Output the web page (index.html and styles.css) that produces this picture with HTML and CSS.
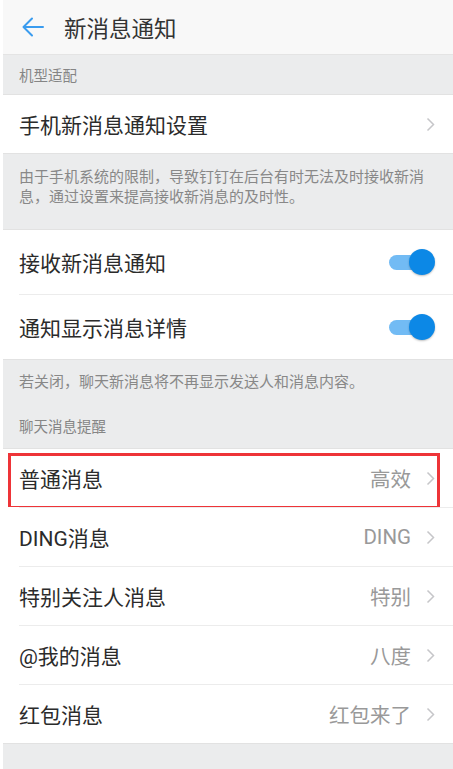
FILE: index.html
```html
<!DOCTYPE html>
<html lang="zh-CN">
<head>
  <meta charset="UTF-8" />
  <title>新消息通知</title>
  <meta name="viewport" content="width=device-width, initial-scale=1.0" />
  <link rel="stylesheet" href="styles.css">
</head>
<body>

  <div class="header">
    <svg class="back" width="22" height="20" viewBox="0 0 22 20">
      <path d="M21 10H2M10 1.5L1.5 10L10 18.5" fill="none" stroke="#3a9cef" stroke-width="2" stroke-linecap="round" stroke-linejoin="round"/>
    </svg>
    <span class="title">新消息通知</span>
  </div>

  <div class="section-title">机型适配</div>

  <div class="row">
    <div class="row-body">
      <span class="label">手机新消息通知设置</span>
      <svg class="chevron" width="9" height="15" viewBox="0 0 9 15"><path d="M1.5 1.5L7.5 7.5L1.5 13.5" fill="none" stroke="#c6c6c9" stroke-width="1.5"/></svg>
    </div>
  </div>

  <div class="note note-first">由于手机系统的限制，导致钉钉在后台有时无法及时接收新消息，通过设置来提高接收新消息的及时性。</div>

  <div class="row row-tall">
    <div class="row-body">
      <span class="label">接收新消息通知</span>
      <span class="toggle"><span class="thumb"></span></span>
    </div>
  </div>
  <div class="row row-tall">
    <div class="row-body sep">
      <span class="label">通知显示消息详情</span>
      <span class="toggle"><span class="thumb"></span></span>
    </div>
  </div>

  <div class="note note-second">若关闭，聊天新消息将不再显示发送人和消息内容。</div>
  <div class="section-title section-chat">聊天消息提醒</div>

  <div class="row highlighted">
    <div class="row-body">
      <span class="label">普通消息</span>
      <span class="value">高效</span>
      <svg class="chevron" width="9" height="15" viewBox="0 0 9 15"><path d="M1.5 1.5L7.5 7.5L1.5 13.5" fill="none" stroke="#c6c6c9" stroke-width="1.5"/></svg>
    </div>
    <div class="mark"></div>
  </div>
  <div class="row">
    <div class="row-body sep">
      <span class="label">DING消息</span>
      <span class="value">DING</span>
      <svg class="chevron" width="9" height="15" viewBox="0 0 9 15"><path d="M1.5 1.5L7.5 7.5L1.5 13.5" fill="none" stroke="#c6c6c9" stroke-width="1.5"/></svg>
    </div>
  </div>
  <div class="row">
    <div class="row-body sep">
      <span class="label">特别关注人消息</span>
      <span class="value">特别</span>
      <svg class="chevron" width="9" height="15" viewBox="0 0 9 15"><path d="M1.5 1.5L7.5 7.5L1.5 13.5" fill="none" stroke="#c6c6c9" stroke-width="1.5"/></svg>
    </div>
  </div>
  <div class="row">
    <div class="row-body sep">
      <span class="label">@我的消息</span>
      <span class="value">八度</span>
      <svg class="chevron" width="9" height="15" viewBox="0 0 9 15"><path d="M1.5 1.5L7.5 7.5L1.5 13.5" fill="none" stroke="#c6c6c9" stroke-width="1.5"/></svg>
    </div>
  </div>
  <div class="row">
    <div class="row-body sep">
      <span class="label">红包消息</span>
      <span class="value">红包来了</span>
      <svg class="chevron" width="9" height="15" viewBox="0 0 9 15"><path d="M1.5 1.5L7.5 7.5L1.5 13.5" fill="none" stroke="#c6c6c9" stroke-width="1.5"/></svg>
    </div>
  </div>

  <div class="footer"></div>

</body>
</html>
```

FILE: styles.css
```css
    html, body {
      margin: 0;
      background-color: #fff;
    }

    body {
      padding-left: 3px;
      font-family: Roboto, "Noto Sans CJK SC", sans-serif;
      color: #333;
    }

    .header {
      height: 54px;
      display: flex;
      align-items: center;
      padding-left: 19px;
      background-color: #f8f8f8;
      border-bottom: 1px solid #e4e4e4;
    }

    .back {
      margin-right: 20px;
      margin-top: -1px;
    }

    .title {
      font-size: 22.5px;
      color: #333;
    }

    .section-title {
      height: 39px;
      display: flex;
      align-items: center;
      padding-left: 16px;
      font-size: 14.5px;
      color: #858585;
      background-color: #ebeced;
      border-bottom: 1px solid #e2e2e2;
    }

    .section-chat {
      height: 47px;
      align-items: flex-start;
      box-sizing: border-box;
      padding-top: 13px;
    }

    .row {
      position: relative;
      padding-left: 16px;
      background-color: #fff;
    }

    .row-body {
      height: 58px;
      display: flex;
      align-items: center;
      padding-right: 18px;
    }

    .row-tall .row-body {
      height: 64px;
    }

    .sep {
      border-top: 1px solid #ececec;
    }

    .label {
      flex: 1;
      font-size: 21px;
      color: #2b2b2b;
    }

    .value {
      font-size: 20.5px;
      color: #999;
      margin-right: 15px;
    }

    .chevron {
      display: block;
    }

    .note {
      padding: 14px 20px 0 16px;
      font-size: 15px;
      line-height: 19.5px;
      color: #888;
      background-color: #ebeced;
      border-top: 1px solid #e2e2e2;
    }

    .note-first {
      height: 61px;
      border-bottom: 1px solid #e2e2e2;
    }

    .note-second {
      height: 29px;
      padding-top: 13px;
    }

    .toggle {
      position: relative;
      width: 32px;
      height: 15px;
      border-radius: 8px;
      background-color: #72bbf4;
    }

    .thumb {
      position: absolute;
      right: -14px;
      top: -6px;
      width: 26px;
      height: 26px;
      border-radius: 50%;
      background-color: #0c88e6;
      box-shadow: 0 1px 2px rgba(0, 0, 0, 0.25);
    }

    .row-tall .toggle {
      margin-right: 14px;
    }

    .mark {
      position: absolute;
      left: 5px;
      top: 4px;
      width: 426px;
      height: 50px;
      border: 3px solid #ee3438;
    }

    .footer {
      height: 30px;
      background-color: #ebeced;
      border-top: 1px solid #e2e2e2;
    }
```
